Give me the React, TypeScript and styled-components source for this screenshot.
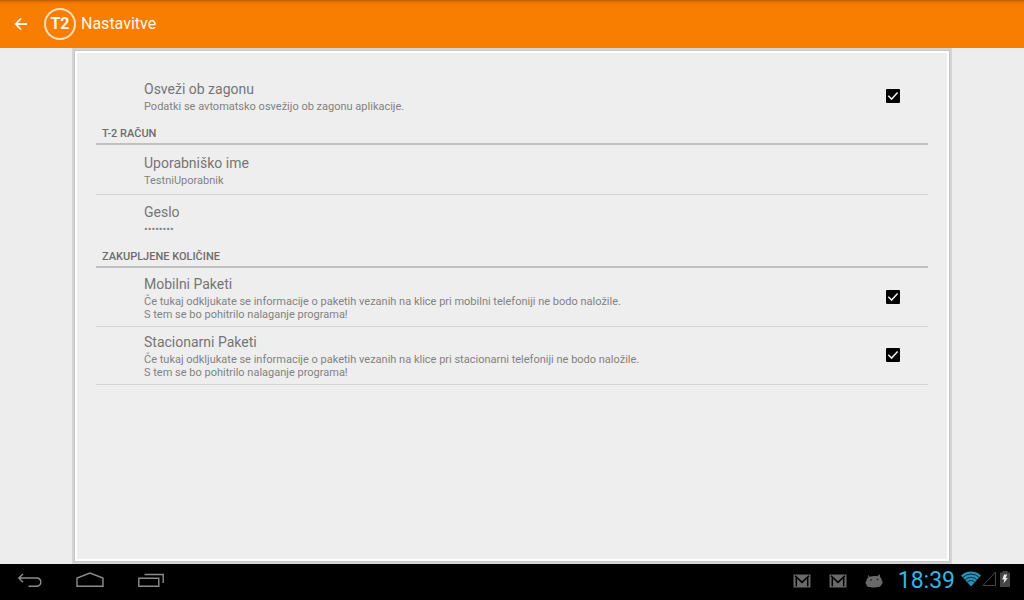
import React, { useState } from "react";
import styled, { createGlobalStyle } from "styled-components";

const GlobalStyle = createGlobalStyle`
  * { box-sizing: border-box; }
  body { margin: 0; background: #ededed; font-family: Roboto, "Noto Sans", sans-serif; }
  button, input { font: inherit; }
`;

const Screen = styled.div`
  display: flex;
  flex-direction: column;
  min-height: 100vh;
`;

const ActionBar = styled.header`
  display: flex;
  align-items: center;
  height: 48px;
  padding-left: 11px;
  background: linear-gradient(#b55c00 0, #e87500 2px, #f77e00 4px);
  color: #fff5ea;
`;

const IconButton = styled.button<{ $width: number }>`
  display: flex;
  align-items: center;
  justify-content: center;
  width: ${(p) => p.$width}px;
  height: 32px;
  padding: 0;
  border: 0;
  background: none;
  color: inherit;
`;

const Logo = styled.span`
  display: flex;
  align-items: center;
  justify-content: center;
  width: 32px;
  height: 32px;
  margin: 0 5px 0 13px;
  border: 2px solid #ffe0c0;
  border-radius: 50%;
  font-size: 16px;
  font-weight: 700;
  line-height: 20px;
`;

const PageTitle = styled.h1`
  margin: 0;
  font-size: 16px;
  font-weight: 400;
  line-height: 20px;
`;

const Content = styled.main`
  display: flex;
  flex: 1;
  padding: 0 72px;
`;

const Card = styled.div`
  display: flex;
  flex: 1;
  border: 3px solid #d4d4d4;
`;

const Panel = styled.div`
  flex: 1;
  border: 2px solid #fff;
  outline: 1px solid #c6c6c6;
  padding: 19px 19px 20px;
  background: #eee;
`;

const SectionTitle = styled.h2`
  height: 25px;
  margin: 0 0 1px;
  padding: 5px 6px 0;
  border-bottom: 2px solid #c0c0c0;
  color: #6c6c6c;
  font-size: 11px;
  font-weight: 500;
  line-height: 18px;
  text-transform: uppercase;
`;

const rowStyle = `
  display: flex;
  align-items: center;
  width: 100%;
  min-height: 48px;
  padding: 6px 28px 5px 48px;
  background: none;
  text-align: left;
`;

const CheckRow = styled.label<{ $divided?: boolean }>`
  ${rowStyle}
  border-bottom: ${(p) => (p.$divided ? "1px solid #d3d3d3" : "0")};
`;

const ButtonRow = styled.button<{ $divided?: boolean }>`
  ${rowStyle}
  min-height: ${(p) => (p.$divided ? 49 : 48)}px;
  border: 0;
  border-bottom: ${(p) => (p.$divided ? "1px solid #d3d3d3" : "0")};
`;

const RowText = styled.span`
  display: flex;
  flex: 1;
  flex-direction: column;
  gap: 2px;
`;

const RowTitle = styled.span`
  color: #757575;
  font-size: 14px;
  font-weight: 400;
  line-height: 18px;
`;

const Summary = styled.span`
  color: #828282;
  font-size: 11px;
  font-weight: 400;
  line-height: 13px;
  white-space: pre-line;
`;

const TickBox = styled.span`
  display: grid;
  width: 14px;
  height: 14px;
  margin-bottom: 2px;
  > * { grid-area: 1 / 1; }
  svg { pointer-events: none; visibility: hidden; }
  input:checked + svg { visibility: visible; }
`;

const TickInput = styled.input`
  appearance: none;
  width: 14px;
  height: 14px;
  margin: 0;
  border: 2px solid #000;
  border-radius: 1px;
  &:checked { background: #000; }
`;

const SystemBar = styled.footer`
  display: flex;
  align-items: center;
  justify-content: space-between;
  height: 36px;
  padding-bottom: 4px;
  background: #000;
  color: #8c8c8c;
`;

const NavKeys = styled.nav`
  display: flex;
  svg { display: block; }
`;

const Status = styled.div`
  display: flex;
  align-items: center;
  padding: 2px 13px 0 0;
  height: 32px;
`;

const Notifications = styled.div`
  display: flex;
  align-items: center;
  gap: 18px;
  margin-right: 15px;
`;

const Clock = styled.time`
  margin-right: 6px;
  color: #33b5e5;
  font-size: 23px;
  line-height: 30px;
`;

const Indicators = styled.div`
  display: flex;
  align-items: center;
  padding-bottom: 4px;
`;

function Tick({ label }: { label: string }) {
  const [on, setOn] = useState(true);
  return (
    <TickBox>
      <TickInput type="checkbox" aria-label={label} checked={on} onChange={() => setOn(!on)} />
      <svg width="14" height="14" viewBox="0 0 14 14" fill="none" stroke="#eee" strokeWidth="1.5">
        <path d="M2.3 6.800l3.300 3.300 6-6.500" />
      </svg>
    </TickBox>
  );
}

function CheckSetting({ title, summary, divided }: { title: string; summary: string; divided?: boolean }) {
  return (
    <CheckRow $divided={divided}>
      <RowText>
        <RowTitle>{title}</RowTitle>
        <Summary>{summary}</Summary>
      </RowText>
      <Tick label={title} />
    </CheckRow>
  );
}

function ValueSetting({ title, summary, divided }: { title: string; summary: string; divided?: boolean }) {
  return (
    <ButtonRow type="button" $divided={divided}>
      <RowText>
        <RowTitle>{title}</RowTitle>
        <Summary>{summary}</Summary>
      </RowText>
    </ButtonRow>
  );
}

function MailIcon() {
  return (
    <svg width="18" height="14" viewBox="0 0 18 14">
      <path fill="#696969" d="M0.500 0.500h17v13h-17z" />
      <path fill="none" stroke="#000" strokeWidth="1.500" d="M3.300 12.200V3M14.700 12.200V3M2 1.800l7 6.600 7-6.600" />
    </svg>
  );
}

function DroidIcon() {
  return (
    <svg width="18" height="14" viewBox="0 0 18 14">
      <path
        fill="#696969"
        d="M3 0.800l1.700 2C7.500 1.900 10 1.800 12.400 2.200L14.600 0l.5 3.100c1.200 1 1.700 2.300 1.700 3.700 1.200.6 1.200 2.600 0 3.300-.6 2-2.200 3.200-4.200 2.800-2.300.8-5 .8-7.200.1C3 13.300 1.500 12 1.300 10.200.200 9.500.200 7.800 1.300 7.200c.1-1.500.8-2.800 2-3.600z"
      />
      <circle cx="6" cy="6" r="0.8" fill="#111" />
      <circle cx="12.500" cy="5.500" r="0.8" fill="#111" />
    </svg>
  );
}

export default function App() {
  return (
    <>
      <GlobalStyle />
      <Screen>
        <ActionBar>
          <IconButton type="button" aria-label="Nazaj" $width={20}>
            <svg width="14" height="14" viewBox="0 0 14 14" fill="none" stroke="currentColor" strokeWidth="1.8">
              <path d="M13 7H2M7 1.500L1.700 7 7 12.500" />
            </svg>
          </IconButton>
          <Logo>T2</Logo>
          <PageTitle>Nastavitve</PageTitle>
        </ActionBar>
        <Content>
          <Card>
            <Panel>
              <CheckSetting title="Osveži ob zagonu" summary="Podatki se avtomatsko osvežijo ob zagonu aplikacije." />
              <SectionTitle>T-2 račun</SectionTitle>
              <ValueSetting title="Uporabniško ime" summary="TestniUporabnik" divided />
              <ValueSetting title="Geslo" summary="••••••••" />
              <SectionTitle>Zakupljene količine</SectionTitle>
              <CheckSetting
                title="Mobilni Paketi"
                summary={"Če tukaj odkljukate se informacije o paketih vezanih na klice pri mobilni telefoniji ne bodo naložile.\nS tem se bo pohitrilo nalaganje programa!"}
                divided
              />
              <CheckSetting
                title="Stacionarni Paketi"
                summary={"Če tukaj odkljukate se informacije o paketih vezanih na klice pri stacionarni telefoniji ne bodo naložile.\nS tem se bo pohitrilo nalaganje programa!"}
                divided
              />
            </Panel>
          </Card>
        </Content>
        <SystemBar>
          <NavKeys>
            <IconButton type="button" aria-label="Nazaj" $width={60}>
              <svg width="26" height="16" viewBox="0 0 26 16" fill="none" stroke="currentColor" strokeWidth="1.4">
                <path d="M6 2L1.800 6 6 10.200M2 6h18.500a4.200 4.200 0 0 1 0 8.200H11.500" />
              </svg>
            </IconButton>
            <IconButton type="button" aria-label="Domov" $width={60}>
              <svg width="28" height="16" viewBox="0 0 28 16" fill="none" stroke="currentColor" strokeWidth="1.4">
                <path d="M1 14.300V6L14 1l13 5v8.300z" />
              </svg>
            </IconButton>
            <IconButton type="button" aria-label="Nedavno" $width={62}>
              <svg width="26" height="16" viewBox="0 0 26 16" fill="none" stroke="currentColor" strokeWidth="1.4">
                <path d="M0.800 6.200h20v8h-20zM6.500 2.500h18.700V11" />
              </svg>
            </IconButton>
          </NavKeys>
          <Status>
            <Notifications>
              <MailIcon />
              <MailIcon />
              <DroidIcon />
            </Notifications>
            <Clock>18:39</Clock>
            <Indicators>
              <svg width="20" height="16" viewBox="0 0 20 16">
                <path fill="#2d8fb5" d="M0 4.500a14.500 14.500 0 0 1 20 0L10 15.500z" />
                <path
                  fill="none"
                  stroke="#04141b"
                  strokeWidth="0.8"
                  d="M2 6.300a11.500 11.500 0 0 1 16 0M4.200 8.800a8 8 0 0 1 11.600 0M6.300 11.200a5 5 0 0 1 7.400 0"
                />
              </svg>
              <svg width="16" height="16" viewBox="0 0 16 16" fill="none" stroke="#454545">
                <path d="M2 14.500L14.500 1v13.500z" />
              </svg>
              <svg width="14" height="16" viewBox="0 0 14 16">
                <path fill="#454545" d="M5.500 0h5v1.500H13V16H3V1.500h2.500z" />
                <path fill="#e8e8e8" d="M9.200 3.500H7L5.300 8.500h2l-.8 4 4.300-5.500H8.700L10.200 3.500z" />
              </svg>
            </Indicators>
          </Status>
        </SystemBar>
      </Screen>
    </>
  );
}
